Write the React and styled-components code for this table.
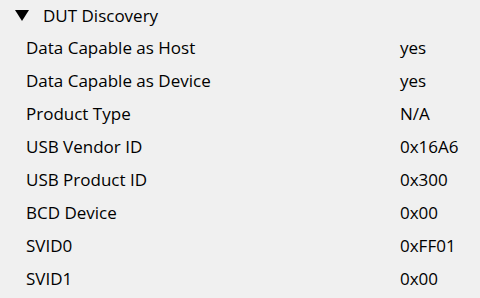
import React from "react";
import styled, { createGlobalStyle } from "styled-components";

const Global = createGlobalStyle`
  html, body {
    margin: 0;
    padding: 0;
    background: #f0f0f0;
  }
  body {
    font-family: "Segoe UI", "Open Sans", "Noto Sans", sans-serif;
    color: #000;
  }
`;

const Panel = styled.div`
  width: 480px;
  height: 298px;
  overflow: hidden;
  background: #f0f0f0;
  display: flex;
  flex-direction: column;
`;

const Header = styled.div`
  height: 31px;
  display: flex;
  align-items: center;
  padding-left: 15px;
  gap: 14px;
  font-size: 17px;
`;

const Caret = styled.svg`
  width: 14px;
  height: 11px;
  flex: none;
`;

const Rows = styled.div`
  display: grid;
  grid-template-columns: 374px 1fr;
  grid-auto-rows: 33px;
  padding-left: 26px;
  font-size: 17px;
`;

const Cell = styled.div`
  display: flex;
  align-items: center;
  white-space: nowrap;
`;

const rows = [
  ["Data Capable as Host", "yes"],
  ["Data Capable as Device", "yes"],
  ["Product Type", "N/A"],
  ["USB Vendor ID", "0x16A6"],
  ["USB Product ID", "0x300"],
  ["BCD Device", "0x00"],
  ["SVID0", "0xFF01"],
  ["SVID1", "0x00"],
];

export default function App() {
  return (
    <Panel>
      <Global />
      <Header>
        <Caret viewBox="0 0 14 11">
          <path d="M0 0 H14 L7 11 Z" fill="#000" />
        </Caret>
        <span>DUT Discovery</span>
      </Header>
      <Rows>
        {rows.map(([label, value]) => (
          <React.Fragment key={label}>
            <Cell>{label}</Cell>
            <Cell>{value}</Cell>
          </React.Fragment>
        ))}
      </Rows>
    </Panel>
  );
}
